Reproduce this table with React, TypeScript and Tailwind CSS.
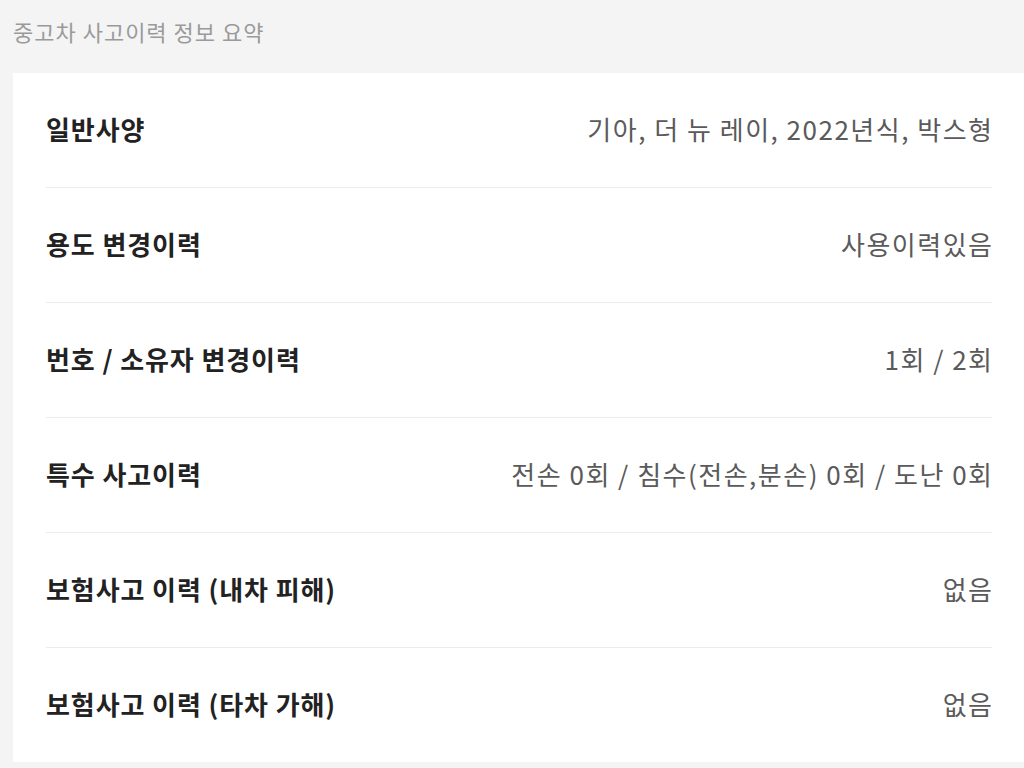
import React from 'react'

const rows: { label: string; value: string }[] = [
  { label: '일반사양', value: '기아, 더 뉴 레이, 2022년식, 박스형' },
  { label: '용도 변경이력', value: '사용이력있음' },
  { label: '번호 / 소유자 변경이력', value: '1회 / 2회' },
  { label: '특수 사고이력', value: '전손 0회 / 침수(전손,분손) 0회 / 도난 0회' },
  { label: '보험사고 이력 (내차 피해)', value: '없음' },
  { label: '보험사고 이력 (타차 가해)', value: '없음' },
]

export default function App() {
  return (
    <div
      className="min-h-screen bg-[#f4f4f4]"
      style={{ fontFamily: '"Noto Sans CJK KR", "Noto Sans", sans-serif' }}
    >
      {/* Section title */}
      <div className="h-[73px] pl-[13px] pt-[16px]">
        <h2 className="text-[22px] leading-[30px] text-[#9a9a9a] tracking-[1px]">
          중고차 사고이력 정보 요약
        </h2>
      </div>

      {/* Summary card */}
      <div className="ml-[13px] bg-white pl-[33px] pr-[32px]">
        {rows.map((row, i) => (
          <div
            key={row.label}
            className={`flex h-[114px] items-center justify-between ${
              i < rows.length - 1 ? 'border-b border-[#ececec] box-content' : ''
            }`}
          >
            <span className="text-[26px] leading-[34px] font-bold text-[#222] tracking-[0.9px] pb-[2px]">
              {row.label}
            </span>
            <span className="text-[26px] leading-[34px] text-[#5a5a5a] tracking-[1.5px] -mr-[1.5px] pb-[2px]">
              {row.value}
            </span>
          </div>
        ))}
      </div>
    </div>
  )
}
